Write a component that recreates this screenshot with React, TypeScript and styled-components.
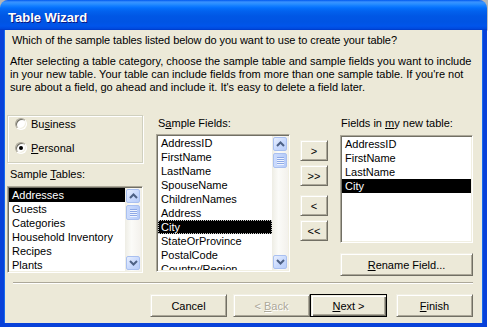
import styled, { createGlobalStyle } from 'styled-components';

const GlobalStyle = createGlobalStyle`
  body {
    margin: 0;
    background: #ffffff;
    font-family: 'Liberation Sans', Arial, sans-serif;
    font-size: 11px;
    color: #000;
  }
`;

const TABLES = ['Addresses', 'Guests', 'Categories', 'Household Inventory', 'Recipes', 'Plants'];
const FIELDS = [
  'AddressID',
  'FirstName',
  'LastName',
  'SpouseName',
  'ChildrenNames',
  'Address',
  'City',
  'StateOrProvince',
  'PostalCode',
  'Country/Region',
];
const NEW_FIELDS = ['AddressID', 'FirstName', 'LastName', 'City'];

function Chevron({ up }: { up?: boolean }) {
  return (
    <svg width='9' height='6' viewBox='0 0 9 6'>
      <path
        d={up ? 'M1 5 L4.5 1.5 L8 5' : 'M1 1 L4.5 4.5 L8 1'}
        fill='none'
        stroke='#4d6185'
        strokeWidth='2'
      />
    </svg>
  );
}

function ScrollBar() {
  return (
    <Track>
      <ScrollButton>
        <Chevron up />
      </ScrollButton>
      <Thumb>
        <Grip />
        <Grip />
        <Grip />
        <Grip />
      </Thumb>
      <TrackSpace />
      <ScrollButton>
        <Chevron />
      </ScrollButton>
    </Track>
  );
}

function Key({ children }: { children: string }) {
  return <Mnemonic>{children}</Mnemonic>;
}

export default function App() {
  return (
    <Screen>
      <GlobalStyle />
      <Window>
        <TitleBar>Table Wizard</TitleBar>
        <Client>
          <Question>Which of the sample tables listed below do you want to use to create your table?</Question>
          <Description>
            <Line>After selecting a table category, choose the sample table and sample fields you want to include</Line>
            <Line>in your new table. Your table can include fields from more than one sample table. If you're not</Line>
            <Line>sure about a field, go ahead and include it. It's easy to delete a field later.</Line>
          </Description>

          <MainArea>
            <LeftColumn>
              <GroupBox>
                <RadioRow>
                  <Radio />
                  <span>
                    Bu<Key>s</Key>iness
                  </span>
                </RadioRow>
                <RadioRow>
                  <Radio $checked />
                  <span>
                    <Key>P</Key>ersonal
                  </span>
                </RadioRow>
              </GroupBox>
              <Label $top={5} $left={3}>
                Sample <Key>T</Key>ables:
              </Label>
              <ListBox $top={5} $width={136} $height={87}>
                <ListItems>
                  {TABLES.map((t, i) => (
                    <Item key={t} $selected={i === 0}>
                      {t}
                    </Item>
                  ))}
                </ListItems>
                <ScrollBar />
              </ListBox>
            </LeftColumn>

            <MiddleColumn>
              <Label $top={2} $left={2}>
                S<Key>a</Key>mple Fields:
              </Label>
              <ListBox $top={4} $width={134} $height={138}>
                <ListItems>
                  {FIELDS.map((f) => (
                    <Item key={f} $selected={f === 'City'} $focused={f === 'City'}>
                      {f}
                    </Item>
                  ))}
                </ListItems>
                <ScrollBar />
              </ListBox>
            </MiddleColumn>

            <MoveButtons>
              <SmallButton>&gt;</SmallButton>
              <SmallButton>&gt;&gt;</SmallButton>
              <SmallButton $gap={9}>&lt;</SmallButton>
              <SmallButton>&lt;&lt;</SmallButton>
            </MoveButtons>

            <RightColumn>
              <Label $top={2} $left={1}>
                Fields in <Key>m</Key>y new table:
              </Label>
              <ListBox $top={5} $width={133} $height={108}>
                <ListItems>
                  {NEW_FIELDS.map((f) => (
                    <Item key={f} $selected={f === 'City'}>
                      {f}
                    </Item>
                  ))}
                </ListItems>
              </ListBox>
              <RenameButton>
                <span>
                  <Key>R</Key>ename Field...
                </span>
              </RenameButton>
            </RightColumn>
          </MainArea>

          <Separator />

          <ButtonRow>
            <PushButton>
              <span>Cancel</span>
            </PushButton>
            <PushButton $disabled $gap={6}>
              <span>
                &lt; <Key>B</Key>ack
              </span>
            </PushButton>
            <PushButton $default>
              <span>
                <Key>N</Key>ext &gt;
              </span>
            </PushButton>
            <PushButton $gap={9}>
              <span>
                <Key>F</Key>inish
              </span>
            </PushButton>
          </ButtonRow>
        </Client>
      </Window>
    </Screen>
  );
}

const Screen = styled.div`
  width: 488px;
  height: 330px;
  overflow: hidden;
  background: linear-gradient(to bottom, #b4b4b4 0px, #c8c8c8 30px, #ffffff 31px);
`;

const Window = styled.div`
  width: 487px;
  height: 327px;
  display: flex;
  flex-direction: column;
  border-radius: 8px 8px 0 0;
  overflow: hidden;
`;

const TitleBar = styled.div`
  height: 30px;
  box-sizing: border-box;
  padding: 10px 0 0 8px;
  font-family: 'Liberation Sans', Arial, sans-serif;
  font-weight: bold;
  font-size: 13px;
  line-height: 15px;
  color: #ffffff;
  text-shadow: 1px 1px #0a1883;
  background: linear-gradient(
    to bottom,
    #0058ee 0px,
    #3a93ff 2px,
    #288eff 4px,
    #127dff 6px,
    #036ffc 8px,
    #0262ee 11px,
    #0057e5 16px,
    #0054e3 22px,
    #0055eb 26px,
    #0048dc 29px,
    #0036c0 30px
  );
`;

const Client = styled.div`
  flex: 1;
  display: flex;
  flex-direction: column;
  background: #ece9d8;
  border-style: solid;
  border-width: 0 4px 4px 4px;
  border-color: #0841d9;
  box-shadow: inset 1px 0 #166aee, inset -1px 0 #166aee;
`;

const Question = styled.div`
  margin: 4px 0 0 8px;
  line-height: 13px;
  white-space: nowrap;
  letter-spacing: -0.08px;
`;

const Description = styled.div`
  margin: 8px 0 0 6px;
  line-height: 13px;
`;

const Line = styled.div`
  white-space: nowrap;
`;

const MainArea = styled.div`
  margin: 21px 0 0 3px;
  height: 162px;
  display: flex;
  align-items: flex-start;
`;

const LeftColumn = styled.div`
  width: 136px;
  display: flex;
  flex-direction: column;
`;

const MiddleColumn = styled.div`
  margin-left: 13px;
  display: flex;
  flex-direction: column;
`;

const RightColumn = styled.div`
  margin-left: 12px;
  width: 133px;
  display: flex;
  flex-direction: column;
`;

const MoveButtons = styled.div`
  margin-left: 10px;
  padding-top: 25px;
  display: flex;
  flex-direction: column;
`;

const GroupBox = styled.div`
  height: 48px;
  box-sizing: border-box;
  border: 1px solid #d0d0bf;
  box-shadow: inset 1px 1px #ffffff, 1px 1px #ffffff;
  padding: 1px 0 0 7px;
  display: flex;
  flex-direction: column;
  gap: 10px;
`;

const RadioRow = styled.div`
  height: 14px;
  display: flex;
  align-items: center;
  gap: 4px;
  line-height: 14px;
`;

const Radio = styled.span<{ $checked?: boolean }>`
  position: relative;
  width: 12px;
  height: 12px;
  box-sizing: border-box;
  border-radius: 50%;
  border: 1px solid;
  border-color: #aca899 #ffffff #ffffff #aca899;
  background: #ffffff;
  box-shadow: inset 1px 1px #716f64, inset -1px -1px #f1efe2;

  &::after {
    content: '';
    display: ${(p) => (p.$checked ? 'block' : 'none')};
    position: absolute;
    left: 3px;
    top: 3px;
    width: 4px;
    height: 4px;
    border-radius: 50%;
    background: #000;
  }
`;

const Label = styled.div<{ $top: number; $left: number }>`
  margin: ${(p) => p.$top}px 0 0 ${(p) => p.$left}px;
  height: 13px;
  line-height: 13px;
  white-space: nowrap;
`;

const Mnemonic = styled.span`
  text-decoration: underline;
  text-underline-offset: 1px;
`;

const ListBox = styled.div<{ $top: number; $width: number; $height: number }>`
  margin-top: ${(p) => p.$top}px;
  width: ${(p) => p.$width}px;
  height: ${(p) => p.$height}px;
  box-sizing: border-box;
  display: flex;
  background: #ffffff;
  border: 1px solid;
  border-color: #aca899 #ffffff #ffffff #aca899;
  box-shadow: inset 1px 1px #716f64, inset -1px -1px #f1efe2;
  padding: 1px;
  overflow: hidden;
`;

const ListItems = styled.div`
  flex: 1;
  min-width: 0;
  overflow: hidden;
`;

const Item = styled.div<{ $selected?: boolean; $focused?: boolean }>`
  height: 14px;
  box-sizing: border-box;
  line-height: 12px;
  padding-left: 2px;
  white-space: nowrap;
  color: ${(p) => (p.$selected ? '#ffffff' : '#000000')};
  background: ${(p) => (p.$selected ? '#000000' : 'transparent')};
  border: 1px ${(p) => (p.$focused ? 'dotted #c8c8c8' : 'solid transparent')};
`;

const Track = styled.div`
  width: 16px;
  flex-shrink: 0;
  box-sizing: border-box;
  padding: 1px;
  display: flex;
  flex-direction: column;
  background: linear-gradient(to right, #eeede5, #fbfbf8 40%, #f3f1ec);
`;

const TrackSpace = styled.div`
  flex: 1;
`;

const ScrollButton = styled.div`
  height: 14px;
  box-sizing: border-box;
  border: 1px solid #a9c0f0;
  border-radius: 2px;
  background: linear-gradient(135deg, #e8effe, #c8d9fd 55%, #b9cdf8);
  display: flex;
  align-items: center;
  justify-content: center;
`;

const Thumb = styled.div`
  margin-top: 2px;
  height: 15px;
  box-sizing: border-box;
  border: 1px solid #a9c0f0;
  border-radius: 2px;
  background: linear-gradient(to right, #cddcfd, #c0d3fb 60%, #b6cbf8);
  display: flex;
  flex-direction: column;
  align-items: center;
  justify-content: center;
  gap: 1px;
`;

const Grip = styled.div`
  width: 7px;
  height: 1px;
  background: #8ea9e6;
  box-shadow: 0 1px #eef4fe;
`;

const RaisedButton = styled.div`
  box-sizing: border-box;
  display: flex;
  align-items: center;
  justify-content: center;
  background: #ece9d8;
  border: 1px solid;
  border-color: #f1efe2 #716f64 #716f64 #f1efe2;
  box-shadow: inset 1px 1px #ffffff, inset -1px -1px #aca899;
  white-space: nowrap;
`;

const SmallButton = styled(RaisedButton)<{ $gap?: number }>`
  margin-top: ${(p) => p.$gap ?? 4}px;
  width: 28px;
  height: 21px;
  &:first-child {
    margin-top: 0;
  }
`;

const RenameButton = styled(RaisedButton)`
  margin-top: 10px;
  height: 23px;
`;

const Separator = styled.div`
  margin: 5px 10px 0 9px;
  border-top: 1px solid #aca899;
  border-bottom: 1px solid #ffffff;
`;

const ButtonRow = styled.div`
  margin-top: 10px;
  padding-right: 10px;
  display: flex;
  justify-content: flex-end;
`;

const PushButton = styled(RaisedButton)<{ $gap?: number; $disabled?: boolean; $default?: boolean }>`
  margin-left: ${(p) => p.$gap ?? 0}px;
  width: 77px;
  height: 23px;
  color: ${(p) => (p.$disabled ? '#aca899' : '#000000')};
  text-shadow: ${(p) => (p.$disabled ? '1px 1px #ffffff' : 'none')};
  ${(p) =>
    p.$default &&
    `
    border-color: #000000;
    box-shadow: inset 1px 1px #f1efe2, inset 2px 2px #ffffff, inset -1px -1px #716f64, inset -2px -2px #aca899;
  `}
`;
